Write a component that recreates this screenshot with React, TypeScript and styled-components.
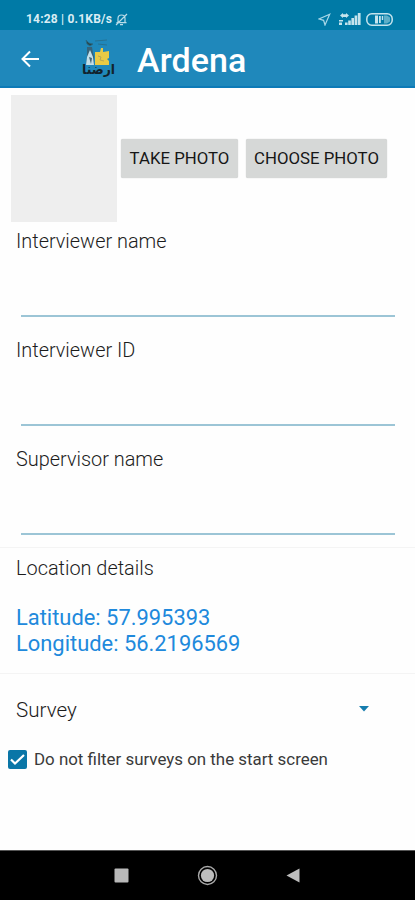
import React from "react";
import styled, { createGlobalStyle } from "styled-components";

const GlobalStyle = createGlobalStyle`
  * { box-sizing: border-box; }
  body { margin: 0; background: #fefefe; }
`;

const Screen = styled.div`
  width: 415px;
  height: 900px;
  display: flex;
  flex-direction: column;
  overflow: hidden;
  background: #fefefe;
  color: #1c1c1c;
  font-family: Roboto, "Liberation Sans", sans-serif;
`;

const StatusBar = styled.div`
  height: 30px;
  flex: none;
  display: flex;
  align-items: center;
  justify-content: space-between;
  padding: 8px 22px 0 26px;
  background: #007aa6;
  color: #d9edf4;
`;

const StatusGroup = styled.div<{ $gap: number }>`
  display: flex;
  align-items: center;
  gap: ${(p) => p.$gap}px;
`;

const StatusText = styled.span`
  font-size: 12px;
  line-height: 14px;
  font-weight: 700;
  letter-spacing: 0.2px;
  white-space: pre;
`;

const BatteryIcon = styled.svg`
  margin-left: -2px;
`;

const AppBar = styled.header`
  height: 58px;
  flex: none;
  display: flex;
  align-items: center;
  padding-left: 20px;
  background: #1f88bb;
  border-bottom: 2px solid #0d7ab7;
  color: #fff;
`;

const Logo = styled.svg`
  margin-left: 38px;
  overflow: visible;
`;

const Title = styled.h1`
  margin: 4px 0 0 19px;
  font-size: 34px;
  line-height: 40px;
  font-weight: 500;
  letter-spacing: 0.1px;
`;

const PhotoRow = styled.div`
  height: 134px;
  flex: none;
  display: flex;
  align-items: center;
  padding: 6px 0 0 11px;
`;

const PhotoBox = styled.div`
  width: 106px;
  height: 127px;
  margin-right: 4px;
  background: #eee;
`;

const Button = styled.button<{ $width: number }>`
  width: ${(p) => p.$width}px;
  height: 39px;
  margin-right: 8px;
  padding: 0;
  border: 0;
  border-radius: 2px;
  background: #d6d8d7;
  box-shadow: 0 0 1px #bbb;
  color: #161616;
  font: 400 16.8px/20px Roboto, sans-serif;
  white-space: nowrap;
`;

const Field = styled.label`
  height: 109px;
  flex: none;
  display: flex;
  flex-direction: column;
  justify-content: space-between;
  padding: 8px 20px 14px 16px;
`;

const Label = styled.span`
  font-size: 19.9px;
  line-height: 24px;
  font-weight: 300;
`;

const SurveyLabel = styled(Label)`
  font-size: 20.6px;
`;

const Underline = styled.div`
  height: 2px;
  margin-left: 5px;
  background: #9cc5d6;
`;

const Section = styled.section<{ $height: number; $top: number }>`
  height: ${(p) => p.$height}px;
  flex: none;
  padding: ${(p) => p.$top}px 17px 0 16px;
  border-top: 1px solid #f4f4f4;
`;

const LocationSection = styled(Section)`
  margin-top: -2px;
`;

const Coordinates = styled.div`
  margin-top: 24px;
  color: #2089dc;
  font-size: 21.9px;
  line-height: 26px;
  font-weight: 400;
`;

const Select = styled.div`
  display: flex;
  align-items: center;
  justify-content: space-between;
  padding-right: 28px;
`;

const Arrow = styled.svg`
  margin-bottom: 3px;
`;

const CheckRow = styled.div`
  display: flex;
  align-items: center;
  gap: 7px;
  margin: 25px 0 0 -8px;
  font-size: 16.9px;
  line-height: 24px;
  white-space: nowrap;
  color: #3a3a3a;
`;

const NavBar = styled.nav`
  height: 50px;
  flex: none;
  margin-top: auto;
  display: flex;
  align-items: center;
  justify-content: space-between;
  padding: 0 115px 0 114px;
  background: #000;
  border-top: 1px solid #555;
`;

const fields = ["Interviewer name", "Interviewer ID", "Supervisor name"];

export default function App() {
  return (
    <Screen>
      <GlobalStyle />
      <StatusBar>
        <StatusGroup $gap={3}>
          <StatusText>14:28 | 0.1KB/s</StatusText>
          <svg width="13" height="13" viewBox="0 0 13 13" fill="none" stroke="#b9dce8" strokeWidth="1.2">
            <path d="M3 9.5V5.5a3.5 3.5 0 0 1 7 0v4M1.5 9.7h10M5 11.7h3M1 12L12 1" />
          </svg>
        </StatusGroup>
        <StatusGroup $gap={7}>
          <svg width="13" height="13" viewBox="0 0 13 13" fill="none" stroke="#a9d8e8" strokeWidth="1.2">
            <path d="M11.7 1.2L1 6l4.6 1.3L7 12z" />
          </svg>
          <svg width="23" height="14" viewBox="0 0 23 14" fill="#c5e4ed">
            <path d="M2 3.5L5 1v1.2h3V1l3 2.5L8 6V5H5v1zM1 8h4v1.5H1zM1 10.5h3V13H1zM7 10.5h2.6V13H7zM10.2 8.5h2.6V13h-2.6zM13.4 6H16v7h-2.6zM16.6 3.5h2.6V13h-2.6zM19.8 1h2.8v12h-2.8z" />
          </svg>
          <BatteryIcon width="27" height="13" viewBox="0 0 27 13">
            <rect x="0.8" y="0.8" width="25.4" height="11.4" rx="5" fill="none" stroke="#c5e4ed" strokeWidth="1.5" />
            <path d="M9 2.5h3v8H9zM13 3h1.8v7H13zM15.8 3h1.4v4h-1.4z" fill="#c5e4ed" />
            <path d="M18 2.5h3l3 2v4l-3 2h-3z" fill="#5eafc8" />
          </BatteryIcon>
        </StatusGroup>
      </StatusBar>

      <AppBar>
        <svg width="20" height="20" viewBox="0 0 20 20" fill="none" stroke="#fff" strokeWidth="2">
          <path d="M19 11H3M10 3.5L2.5 11l7.5 7.5" />
        </svg>
        <Logo width="40" height="42" viewBox="0 0 40 42">
          <path d="M8 3l3 3 4 1-3 2-3-2zM17 4l12-1M20 7l9 1" fill="#27474d" stroke="#286b87" strokeWidth="0.8" />
          <path d="M9 10l5 0 1 6 1 3v9H8l1-9z" fill="#35637a" />
          <path d="M9 20l3-7 3 7 1 8H8z" fill="#c3dfe9" />
          <path d="M11 20l3 1-1 6z" fill="#416578" />
          <path d="M17 15h5l1-4h2v4l6-1v7l-2 1 2 2v4H17z" fill="#e9ca45" />
          <path d="M20 19l3 1-1 3 4 1" fill="none" stroke="#b5a653" />
          <text x="20.5" y="37" textAnchor="middle" textLength="33" lengthAdjust="spacingAndGlyphs" fontFamily="DejaVu Sans, sans-serif" fontSize="13.5" fontWeight="700" fill="#12232d">ارضنا</text>
        </Logo>
        <Title>Ardena</Title>
      </AppBar>

      <PhotoRow>
        <PhotoBox />
        <Button $width={117}>TAKE PHOTO</Button>
        <Button $width={141}>CHOOSE PHOTO</Button>
      </PhotoRow>

      {fields.map((name) => (
        <Field key={name}>
          <Label>{name}</Label>
          <Underline />
        </Field>
      ))}

      <LocationSection $height={126} $top={9}>
        <Label>Location details</Label>
        <Coordinates>
          <div>Latitude: 57.995393</div>
          <div>Longitude: 56.2196569</div>
        </Coordinates>
      </LocationSection>

      <Section $height={120} $top={24}>
        <Select>
          <SurveyLabel>Survey</SurveyLabel>
          <Arrow width="12" height="6" viewBox="0 0 12 6">
            <path d="M1 0h10L6 5.5z" fill="#167dae" />
          </Arrow>
        </Select>
        <CheckRow>
          <svg width="19" height="19" viewBox="0 0 19 19">
            <rect width="19" height="19" rx="2" fill="#0a76a7" />
            <path d="M3 9.5l4 4L16 5" fill="none" stroke="#fff" strokeWidth="2.2" />
          </svg>
          <span>Do not filter surveys on the start screen</span>
        </CheckRow>
      </Section>

      <NavBar>
        <svg width="15" height="15" viewBox="0 0 15 15">
          <rect x="0.5" y="0.5" width="14" height="14" rx="1" fill="#b9b9b9" />
        </svg>
        <svg width="21" height="21" viewBox="0 0 21 21">
          <circle cx="10.5" cy="10.5" r="9" fill="none" stroke="#a9a9a9" strokeWidth="1.4" />
          <circle cx="10.5" cy="10.5" r="6.6" fill="#bdbdbd" />
        </svg>
        <svg width="14" height="15" viewBox="0 0 14 15">
          <path d="M13.5 0.5v14L0.5 7.5z" fill="#bdbdbd" />
        </svg>
      </NavBar>
    </Screen>
  );
}
